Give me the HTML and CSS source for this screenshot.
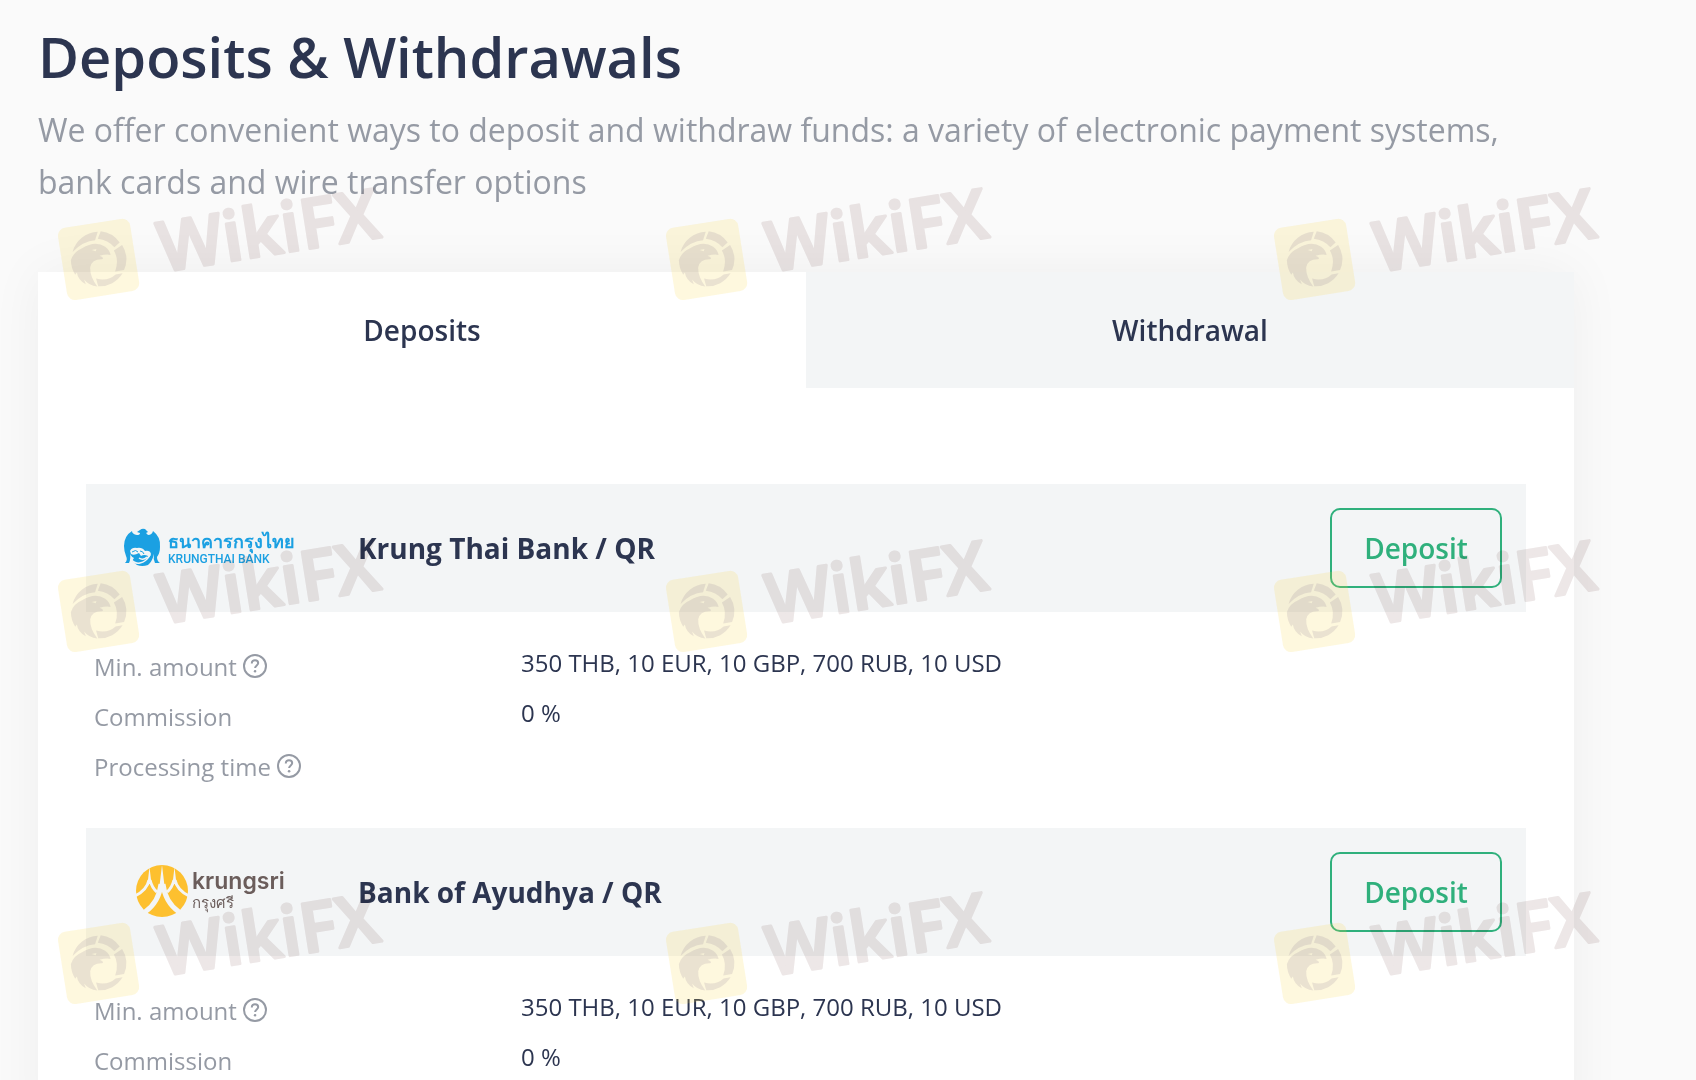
FILE: index.html
```html
<!DOCTYPE html>
<html lang="en">
<head>
<meta charset="utf-8">
<meta name="viewport" content="width=device-width, initial-scale=1">
<title>Deposits &amp; Withdrawals</title>
<link rel="stylesheet" href="styles.css">
</head>
<body>
<svg class="defs" width="0" height="0" aria-hidden="true">
  <symbol id="help" viewBox="0 0 24 24">
    <circle cx="12" cy="12" r="11" fill="none" stroke="currentColor" stroke-width="2"/>
    <path d="M8.8 9.4C8.8 7.4 10.1 6.2 12 6.2s3.2 1.2 3.2 2.9c0 2.3-3.1 2.5-3.1 5" fill="none" stroke="currentColor" stroke-width="2"/>
    <circle cx="12.1" cy="17.3" r="1.3" fill="currentColor"/>
  </symbol>
  <symbol id="mark" viewBox="0 0 360 140" overflow="visible">
    <g transform="rotate(-9 48 79)">
      <rect x="12" y="43" width="73" height="73" rx="8" fill="#fad84a" fill-opacity=".18"/>
      <g fill="#7a6488" fill-opacity=".15">
        <path d="M24 68A27 27 0 0 1 52 52L48 60Q36 59 24 68Z"/>
        <path d="M55 52A27 27 0 0 1 72 66L66 70Q61 62 51 59Z"/>
        <path d="M74 69A27 27 0 0 1 72 94L63 94Q69 83 65 73Z"/>
        <path d="M70 97A27 27 0 0 1 44 106L43 98Q54 103 63 97Z"/>
        <path d="M21 76Q25 68 34 66Q48 60 57 68Q61 72 61 77Q58 75 50 76Q55 79 52 80Q42 78 39 86Q37 95 43 106Q35 104 31 97L32 102Q25 97 25 89L23 91Q20 84 21 76ZM43 69L47 71 48 69Z" fill-rule="evenodd"/>
      </g>
    </g>
    <text class="mark-text" transform="translate(112 92) rotate(-9)">WikiFX</text>
  </symbol>
</svg>

<main class="page">
  <header class="intro">
    <h1 class="title">Deposits &amp; Withdrawals</h1>
    <p class="lead">We offer convenient ways to deposit and withdraw funds: a variety of electronic payment systems, bank cards and wire transfer options</p>
  </header>

  <section class="card">
    <div class="tabs" role="tablist">
      <button class="tab tab-active" type="button" role="tab" aria-selected="true">Deposits</button>
      <button class="tab" type="button" role="tab" aria-selected="false">Withdrawal</button>
    </div>
    <div class="methods">
      <article class="method">
        <div class="bar">
          <svg class="logo" viewBox="0 0 200 80" role="img" aria-label="Krungthai Bank">
            <path fill="#1ba0e2" d="M25 24L28 22Q30 20 33 21L36 24L34 25L36 27Q40 27 41 23Q49 29 48 39Q48 45 45 49Q45 53 48 55H43Q41 51 42 46Q40 54 36 57Q30 59 25 57L20 53L22 50Q18 48 18 44Q19 51 17 55H13Q16 52 14 48Q12 43 12 38Q12 28 20 23Q20 26 25 27Q28 27 28 25Z"/>
            <path fill="#f3f5f6" d="M18 43Q20 39 25 40Q30 39 33 43Q38 42 39 46Q38 50 34 51L36 48Q32 46 29 48L27 45Q22 48 19 46Z"/>
            <path fill="none" stroke="#f3f5f6" stroke-width="1.5" d="M19 51q3 5 9 4t10-8M27 50q4 3 8-1"/>
            <path fill="none" stroke="#1ba0e2" d="M20 44q4-3 6 0M28 43q3 0 4 3"/>
            <text class="ktb-thai" x="56" y="40">ธนาคารกรุงไทย</text>
            <text class="ktb-latin" x="56" y="55">KRUNGTHAI BANK</text>
          </svg>
          <h2 class="name">Krung Thai Bank / QR</h2>
          <button class="deposit" type="button">Deposit</button>
        </div>
        <dl class="details">
          <dt class="label">Min. amount <svg class="help"><use href="#help"/></svg></dt>
          <dd class="value">350 THB, 10 EUR, 10 GBP, 700 RUB, 10 USD</dd>
          <dt class="label">Commission</dt>
          <dd class="value">0 %</dd>
          <dt class="label">Processing time <svg class="help"><use href="#help"/></svg></dt>
          <dd class="value"></dd>
        </dl>
      </article>

      <article class="method">
        <div class="bar">
          <svg class="logo" viewBox="0 0 200 80" role="img" aria-label="Krungsri">
            <circle cx="50" cy="39" r="26" fill="#fdc02f"/>
            <g fill="none" stroke="#f3f5f6" stroke-width="3">
              <path d="M37 28Q35 38 23 44M38 28Q40 36 45 40M63 28Q65 38 77 44M62 28Q60 36 55 40"/>
              <path stroke-width="5" d="M49 32Q47 50 33 60M51 32Q53 50 67 60"/>
            </g>
            <path fill="#f3f5f6" d="M37.500 15L39.500 32H35.500ZM50 13L53 38H47ZM62.500 15L64.500 32H60.500Z"/>
            <text class="ks-latin" x="80" y="37">krungsri</text>
            <text class="ks-thai" x="80" y="56">กรุงศรี</text>
          </svg>
          <h2 class="name">Bank of Ayudhya / QR</h2>
          <button class="deposit" type="button">Deposit</button>
        </div>
        <dl class="details">
          <dt class="label">Min. amount <svg class="help"><use href="#help"/></svg></dt>
          <dd class="value">350 THB, 10 EUR, 10 GBP, 700 RUB, 10 USD</dd>
          <dt class="label">Commission</dt>
          <dd class="value">0 %</dd>
        </dl>
      </article>
    </div>
  </section>
</main>

<div class="watermarks" aria-hidden="true">
  <svg class="mark"><use href="#mark"/></svg><svg class="mark"><use href="#mark"/></svg><svg class="mark"><use href="#mark"/></svg>
  <svg class="mark"><use href="#mark"/></svg><svg class="mark"><use href="#mark"/></svg><svg class="mark"><use href="#mark"/></svg>
  <svg class="mark"><use href="#mark"/></svg><svg class="mark"><use href="#mark"/></svg><svg class="mark"><use href="#mark"/></svg>
</div>
</body>
</html>
```
FILE: styles.css
```css
* { box-sizing: border-box; }

body {
  margin: 0;
  height: 100vh;
  overflow: hidden;
  background: #fafafa;
  color: #2c3550;
  font-family: "Open Sans", "Noto Sans", sans-serif;
}

h1, h2, p, dl, dd { margin: 0; }
button { font-family: inherit; color: inherit; cursor: pointer; }

.defs { position: absolute; }

.page { padding: 15px 122px 0 38px; }

.title { font-size: 56px; line-height: 82px; font-weight: 600; }

.lead {
  margin-top: 7px;
  font-size: 32px;
  line-height: 52px;
  color: #959aa4;
}

.card {
  margin-top: 64px;
  background: #fff;
  box-shadow: 0 0 50px rgba(0, 0, 0, 0.05);
}

.tabs { display: grid; grid-template-columns: 1fr 1fr; }

.tab {
  height: 116px;
  padding: 0;
  border: 0;
  background: #f3f5f6;
  font-size: 28px;
  font-weight: 600;
}

.tab-active { background: #fff; }

.methods {
  display: grid;
  gap: 37px;
  padding: 96px 48px 48px;
}

.bar {
  display: flex;
  align-items: center;
  gap: 46px;
  height: 128px;
  padding: 0 24px 0 26px;
  background: #f3f5f6;
}

.logo { width: 200px; height: 80px; flex: none; overflow: visible; }
.name { flex: 1; font-size: 28px; line-height: 40px; font-weight: 700; }

.deposit {
  width: 172px;
  height: 80px;
  border: 2px solid #2fb07c;
  border-radius: 10px;
  background: transparent;
  color: #2fb07c;
  font-size: 28px;
  font-weight: 600;
}

.details {
  display: grid;
  grid-template-columns: 427px 1fr;
  grid-auto-rows: 50px;
  padding: 29px 8px 0;
  font-size: 24px;
}

.label {
  display: flex;
  align-items: center;
  gap: 6px;
  color: #959aa4;
}

.value { line-height: 44px; }
.help { width: 24px; height: 24px; }

.ktb-thai { fill: #1ba0e2; font-size: 18px; font-weight: 700; }
.ktb-latin { fill: #1ba0e2; font: 500 12px Roboto, sans-serif; }
.ks-latin { fill: #6b5d5b; font: 600 23px "Inter", sans-serif; }
.ks-thai { fill: #6b5d5b; font-size: 15px; }

.watermarks {
  position: absolute;
  inset: 180px 0 0 50px;
  display: grid;
  grid-template-columns: repeat(3, 360px);
  grid-auto-rows: 140px;
  gap: 212px 248px;
  overflow: hidden;
  pointer-events: none;
}

.mark { width: 360px; height: 140px; overflow: visible; }

.mark-text {
  font: 600 69px "Open Sans", sans-serif;
  fill: #ede7e7;
  stroke: #ede7e7;
  stroke-width: 3px;
  stroke-linejoin: round;
  mix-blend-mode: multiply;
}
```
